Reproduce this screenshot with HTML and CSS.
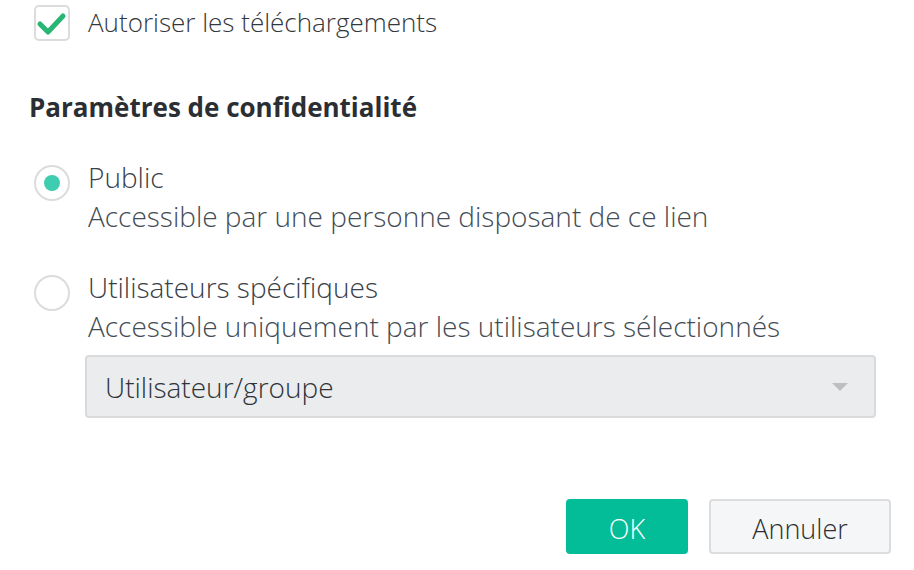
FILE: index.html
```html
<!DOCTYPE html>
<html lang="fr">
<head>
    <meta charset="UTF-8">
    <title>Partage du lien</title>
    <link rel="stylesheet" href="styles.css">
</head>
<body>
    <div class="dialog">
        <label class="check-row">
            <span class="checkbox">
                <svg width="32" height="32" viewBox="0 0 32 32">
                    <path d="M4 17 L12 25 L27 9" fill="none" stroke="#29b574" stroke-width="5" stroke-linecap="round" stroke-linejoin="round"/>
                </svg>
            </span>
            <span class="check-label">Autoriser les téléchargements</span>
        </label>

        <h2 class="section-title">Paramètres de confidentialité</h2>

        <div class="option">
            <span class="radio checked"></span>
            <div class="option-text">
                <div class="label">Public</div>
                <div class="desc">Accessible par une personne disposant de ce lien</div>
            </div>
        </div>

        <div class="option">
            <span class="radio"></span>
            <div class="option-text">
                <div class="label">Utilisateurs spécifiques</div>
                <div class="desc">Accessible uniquement par les utilisateurs sélectionnés</div>
                <div class="select">
                    <span>Utilisateur/groupe</span>
                    <span class="caret"></span>
                </div>
            </div>
        </div>

        <div class="actions">
            <button class="btn btn-ok">OK</button>
            <button class="btn btn-cancel">Annuler</button>
        </div>
    </div>
</body>
</html>
```

FILE: styles.css
```css
body {
    margin: 0;
    font-family: "Open Sans", Arial, sans-serif;
    color: #3b4147;
    background: #fff;
}
.dialog {
    width: 914px;
    height: 570px;
    padding: 3px 23px 0 28px;
    box-sizing: border-box;
}
.check-label {
    font-size: 26px;
    font-weight: 300;
    line-height: 39px;
    color: #33383d;
}
.label,
.desc {
    font-size: 28px;
    font-weight: 300;
    line-height: 39px;
    color: #3a4047;
}
.desc {
    color: #444c55;
}
.check-row {
    display: flex;
    align-items: center;
    gap: 18px;
    margin-left: 6px;
}
.checkbox {
    width: 36px;
    height: 36px;
    box-sizing: border-box;
    border: 2px solid #dcdcdc;
    border-radius: 5px;
    display: flex;
    align-items: center;
    justify-content: center;
}
.section-title {
    margin: 48px 0 0 1px;
    font-size: 26px;
    font-weight: 700;
    line-height: 34px;
    color: #2b2f33;
}
.option {
    display: flex;
    gap: 18px;
    margin-left: 6px;
    margin-top: 34px;
}
.option + .option {
    margin-top: 32px;
}
.radio {
    flex: none;
    width: 36px;
    height: 36px;
    margin-top: 7px;
    box-sizing: border-box;
    border: 2px solid #dcdcdc;
    border-radius: 50%;
    display: flex;
    align-items: center;
    justify-content: center;
}
.radio.checked::after {
    content: "";
    width: 16px;
    height: 16px;
    border-radius: 50%;
    background: #3ecdb0;
}
.option-text {
    flex: 1;
}
.select {
    margin: 9px 0 0 -3px;
    height: 63px;
    width: 791px;
    box-sizing: border-box;
    border: 2px solid #d9dadc;
    border-radius: 4px;
    background: #ebecee;
    padding: 0 26px 0 18px;
    display: flex;
    align-items: center;
    justify-content: space-between;
    font-size: 28px;
    font-weight: 300;
    color: #2f3439;
}
.caret {
    width: 0;
    height: 0;
    border-left: 8px solid transparent;
    border-right: 8px solid transparent;
    border-top: 8px solid #bdbec0;
}
.actions {
    display: flex;
    justify-content: flex-end;
    gap: 21px;
    margin-top: 81px;
}
.btn {
    height: 55px;
    padding: 3px 0 0;
    font-family: "Open Sans", Arial, sans-serif;
    font-size: 27px;
    font-weight: 300;
    border-radius: 4px;
    cursor: pointer;
}
.btn-ok {
    width: 122px;
    background: #03bd98;
    border: none;
    color: #fff;
}
.btn-cancel {
    width: 182px;
    background: #f5f6f8;
    border: 2px solid #dcdddf;
    color: #2b2f33;
}
```
